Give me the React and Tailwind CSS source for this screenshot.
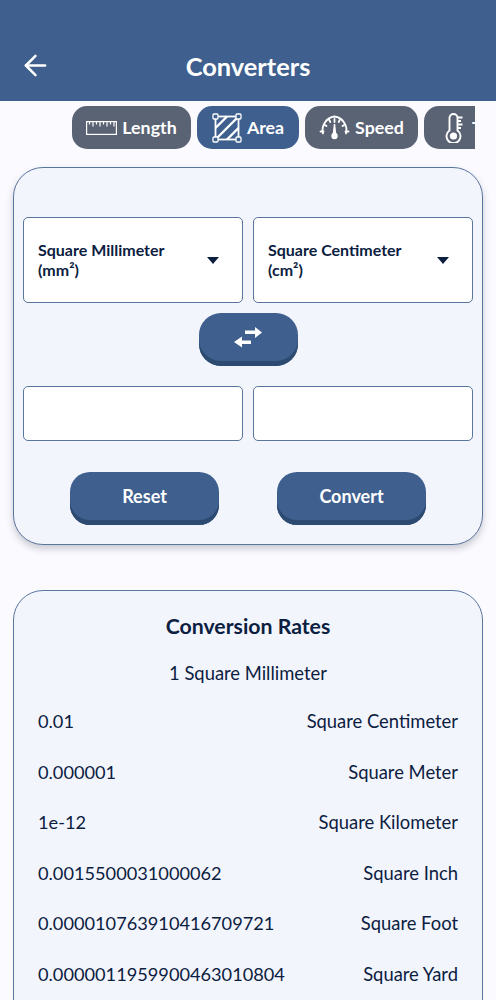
import { ArrowLeft } from 'lucide-react';

const rates = [
  ['0.01', 'Square Centimeter'],
  ['0.000001', 'Square Meter'],
  ['1e-12', 'Square Kilometer'],
  ['0.0015500031000062', 'Square Inch'],
  ['0.000010763910416709721', 'Square Foot'],
  ['0.0000011959900463010804', 'Square Yard'],
];

function RulerIcon() {
  return (
    <svg width="31" height="14" viewBox="0 0 31 14" fill="none" stroke="white" strokeWidth="1.200">
      <rect x="0.600" y="0.600" width="29.800" height="12.800" />
      <path d="M3.500 1v2.500M7 1v4.500M10.500 1v2.500M14 1v4.500M17.500 1v2.500M21 1v4.500M24.500 1v2.500M28 1v4.500" />
    </svg>
  );
}

function AreaIcon() {
  return (
    <svg width="30" height="30" viewBox="0 0 30 30" fill="none" stroke="white" strokeWidth="1.800">
      <rect x="3.500" y="3.500" width="23" height="23" />
      <path d="M3.500 15 15 3.500M3.500 26.500l23-23M15 26.500 26.500 15" strokeWidth="2.400" />
      <g fill="#3f5f8f" strokeWidth="1.300">
        <rect x="1" y="1" width="5" height="5" rx="1" />
        <rect x="24" y="1" width="5" height="5" rx="1" />
        <rect x="1" y="24" width="5" height="5" rx="1" />
        <rect x="24" y="24" width="5" height="5" rx="1" />
      </g>
    </svg>
  );
}

function SpeedIcon() {
  return (
    <svg width="31" height="25" viewBox="0 0 31 25" fill="none" stroke="white" strokeWidth="1.800" strokeLinecap="round">
      <path d="M4 18.500A13.700 13.700 0 0 1 15.500 1.500a13.700 13.700 0 0 1 11.500 17" />
      <path d="M1.500 16.500h3M26.500 16.500h3M5 9.500l2.500 1.500M26 9.500 23.500 11M10 4.500l1.300 2.500M21 4.500 19.700 7M15.500 4v3" />
      <path d="M14.800 9h1.400l1.200 11h-3.800z" fill="white" stroke="none" />
      <circle cx="15.500" cy="21" r="3.200" fill="white" stroke="none" />
    </svg>
  );
}

function ThermometerIcon() {
  return (
    <svg width="19" height="30" viewBox="0 0 19 30" fill="none" stroke="white" strokeWidth="1.900">
      <path d="M4.500 17.500V5a4 4 0 0 1 8 0v12.500a7 7 0 1 1-8 0z" />
      <path d="M12.500 4.500h5M12.500 8h3.500M12.500 11.500h5M12.500 15h3.500" />
      <circle cx="8.500" cy="23" r="3.600" fill="white" stroke="none" />
    </svg>
  );
}

function SwapIcon() {
  return (
    <svg width="28" height="22" viewBox="0 0 28 22" fill="white">
      <path d="M11 4.500h10V1l7 5.500-7 5.500V8H11z" />
      <path d="M17 14.500H8V10.500L0 16l8 5.500v-3.500h9z" />
    </svg>
  );
}

function Tab({ icon, label, active, className }) {
  return (
    <div className={`flex h-[43px] shrink-0 items-center justify-center gap-[5px] rounded-[15px] text-[17.800px] font-bold text-white ${active ? 'bg-[#3f5f8f]' : 'bg-[#5a6373]'} ${className}`}>
      {icon}
      <span>{label}</span>
    </div>
  );
}

function UnitSelect({ name, unit }) {
  return (
    <div className="flex h-[86px] flex-1 items-center justify-between rounded-[5px] border border-[#5a769f] bg-white pl-[14px] pr-[23px]">
      <div className="text-[16px] font-bold leading-[20px] text-[#0b2040]">
        <div>{name}</div>
        <div>{unit}</div>
      </div>
      <div className="mt-[1px] h-0 w-0 border-x-[6.500px] border-t-[7px] border-x-transparent border-t-[#0b2040]" />
    </div>
  );
}

function PrimaryButton({ children, className }) {
  return (
    <button className={`flex h-[53px] items-center justify-center bg-[#3f5f8f] pb-[5px] text-[18px] font-bold text-white shadow-[inset_0_-5px_0_#2d4a70] ${className}`}>
      {children}
    </button>
  );
}

export default function App() {
  return (
    <div className="h-[1000px] w-[496px] overflow-hidden bg-[#fafaff] font-['Lato',sans-serif]">
      {/* Header */}
      <div className="flex h-[101px] items-end bg-[#3f5f8f] pl-[19px] pr-[18px] pb-[19px]">
        <ArrowLeft className="h-[33px] w-[33px] text-white" strokeWidth={1.800} />
        <h1 className="mb-[1px] flex-1 pr-[34px] text-center text-[25.400px] font-bold leading-[30px] text-white">Converters</h1>
      </div>

      {/* Category tabs */}
      <div className="mt-[5px] flex w-[475px] gap-[6px] overflow-hidden pl-[72px]">
        <Tab icon={<RulerIcon />} label="Length" className="w-[119px]" />
        <Tab icon={<AreaIcon />} label="Area" active className="w-[102px]" />
        <Tab icon={<SpeedIcon />} label="Speed" className="w-[113px]" />
        <Tab icon={<ThermometerIcon />} label="Temperature" className="w-[150px] !justify-start !gap-[8px] pl-[21px]" />
      </div>

      {/* Converter card */}
      <div className="mx-[13px] mt-[18px] h-[378px] rounded-[30px] border border-[#5a769f] bg-[#f3f5fd] px-[9px] pt-[49px] shadow-[0_4px_7px_rgba(60,60,70,0.25)]">
        <div className="flex gap-[10px]">
          <UnitSelect name="Square Millimeter" unit="(mm²)" />
          <UnitSelect name="Square Centimeter" unit="(cm²)" />
        </div>
        <div className="mt-[10px] flex justify-center">
          <PrimaryButton className="w-[99px] rounded-[22px]">
            <SwapIcon />
          </PrimaryButton>
        </div>
        <div className="mt-[20px] flex gap-[10px]">
          <div className="h-[55px] flex-1 rounded-[5px] border border-[#5a769f] bg-white" />
          <div className="h-[55px] flex-1 rounded-[5px] border border-[#5a769f] bg-white" />
        </div>
        <div className="mt-[31px] flex justify-center gap-[58px]">
          <PrimaryButton className="w-[149px] rounded-[20px]">Reset</PrimaryButton>
          <PrimaryButton className="w-[149px] rounded-[20px]">Convert</PrimaryButton>
        </div>
      </div>

      {/* Conversion rates */}
      <div className="mx-[13px] mt-[45px] h-[440px] rounded-[30px] border border-[#5a769f] bg-[#f3f5fd] px-[24px] pt-[22px] text-[#0b2040]">
        <h2 className="text-center text-[21.250px] font-bold leading-[26px]">Conversion Rates</h2>
        <div className="mt-[22px] text-center text-[18.400px] leading-[24px]">1 Square Millimeter</div>
        <div className="mt-[24px] flex flex-col gap-[26.500px]">
          {rates.map(([value, unit]) => (
            <div key={unit} className="flex justify-between text-[18.400px] leading-[24px]">
              <span className="text-[18.200px]">{value}</span>
              <span>{unit}</span>
            </div>
          ))}
        </div>
      </div>
    </div>
  );
}
